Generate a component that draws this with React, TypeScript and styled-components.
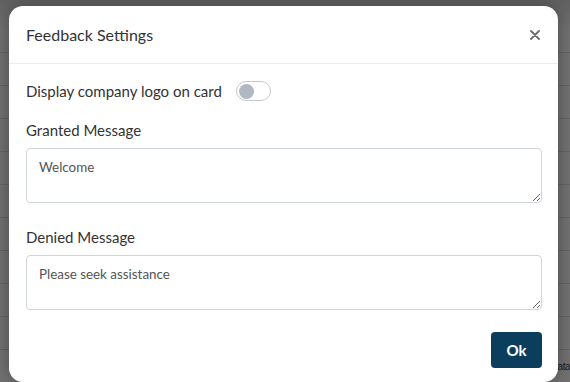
import React from "react";
import styled, { createGlobalStyle } from "styled-components";

const Global = createGlobalStyle`
  html, body { margin: 0; padding: 0; }
  body {
    width: 570px;
    height: 382px;
    overflow: hidden;
    background: #6f6f6f;
    font-family: Lato, "Noto Sans", sans-serif;
  }
`;

const Page = styled.div`
  position: relative;
  width: 570px;
  height: 382px;
  overflow: hidden;
  background: #727272;
`;

const BackTable = styled.div`
  display: flex;
  flex-direction: column;
  padding-top: 20px;
`;

const BackRow = styled.div`
  height: 32px;
  border-bottom: 1px solid #646464;
`;

const BackText = styled.span`
  position: absolute;
  right: 0;
  bottom: 10px;
  font-family: "Liberation Sans", sans-serif;
  font-size: 10px;
  letter-spacing: -0.5px;
  color: #1a1a1a;
`;

const Overlay = styled.div`
  position: absolute;
  inset: 0;
  display: flex;
  justify-content: flex-start;
  align-items: flex-start;
  padding: 6px 0 0 9px;
  background: linear-gradient(to bottom, rgba(0,0,0,0.15), rgba(0,0,0,0) 30px);
`;

const Modal = styled.div`
  width: 549px;
  height: 376px;
  background: #fff;
  border-radius: 14px;
  box-shadow: 0 0 18px rgba(0, 0, 0, 0.35);
  display: flex;
  flex-direction: column;
  overflow: hidden;
`;

const Header = styled.div`
  height: 57px;
  flex: none;
  display: flex;
  align-items: center;
  justify-content: space-between;
  padding: 0 15px 0 17px;
  border-bottom: 1px solid #ececec;
`;

const Title = styled.h5`
  margin: 0;
  font-size: 16px;
  font-weight: 400;
  color: #333;
`;

const Close = styled.button`
  border: 0;
  background: none;
  padding: 0;
  width: 16px;
  height: 16px;
  display: flex;
  align-items: center;
  justify-content: center;
  cursor: pointer;
`;

const Body = styled.div`
  padding: 17px 16px 0 17px;
  display: flex;
  flex-direction: column;
`;

const SwitchRow = styled.label`
  display: flex;
  align-items: center;
  gap: 14px;
  height: 20px;
  font-size: 15px;
  color: #333;
`;

const SwitchTrack = styled.span`
  box-sizing: border-box;
  width: 35px;
  height: 20px;
  border: 1px solid #c3c8cf;
  border-radius: 10px;
  display: flex;
  align-items: center;
  padding: 0 2px;
`;

const SwitchKnob = styled.span`
  width: 15px;
  height: 15px;
  border-radius: 50%;
  background: #b1b8c1;
`;

const FieldLabel = styled.div<{ $top: number }>`
  margin-top: ${(p) => p.$top}px;
  font-size: 15px;
  line-height: 20px;
  color: #333;
`;

const Area = styled.textarea`
  margin-top: 8px;
  box-sizing: border-box;
  width: 516px;
  height: 55px;
  border: 1px solid #cfd4da;
  border-radius: 4px;
  padding: 8px 12px;
  font-family: Lato, "Noto Sans", sans-serif;
  font-size: 13.4px;
  line-height: 20px;
  color: #555;
  resize: vertical;
  outline: none;
`;

const Footer = styled.div`
  display: flex;
  justify-content: flex-end;
  padding: 22px 16px 0 0;
`;

const OkButton = styled.button`
  width: 51px;
  height: 36px;
  border: 0;
  border-radius: 4px;
  background: #0b3d5d;
  color: #fff;
  font-family: Lato, "Noto Sans", sans-serif;
  font-size: 15px;
  font-weight: 700;
  cursor: pointer;
`;

export default function App() {
  const rows = Array.from({ length: 11 });
  return (
    <>
      <Global />
      <Page>
        <BackTable>
          {rows.map((_, i) => (
            <BackRow key={i} />
          ))}
        </BackTable>
        <BackText>lata</BackText>
        <Overlay>
          <Modal>
            <Header>
              <Title>Feedback Settings</Title>
              <Close aria-label="Close">
                <svg width="10" height="10" viewBox="0 0 10 10">
                  <path d="M1 1L9 9M9 1L1 9" stroke="#6b6b6b" strokeWidth="1.8" strokeLinecap="round" />
                </svg>
              </Close>
            </Header>
            <Body>
              <SwitchRow>
                Display company logo on card
                <SwitchTrack>
                  <SwitchKnob />
                </SwitchTrack>
              </SwitchRow>
              <FieldLabel $top={19}>Granted Message</FieldLabel>
              <Area defaultValue="Welcome" />
              <FieldLabel $top={24}>Denied Message</FieldLabel>
              <Area defaultValue="Please seek assistance" />
            </Body>
            <Footer>
              <OkButton>Ok</OkButton>
            </Footer>
          </Modal>
        </Overlay>
      </Page>
    </>
  );
}
